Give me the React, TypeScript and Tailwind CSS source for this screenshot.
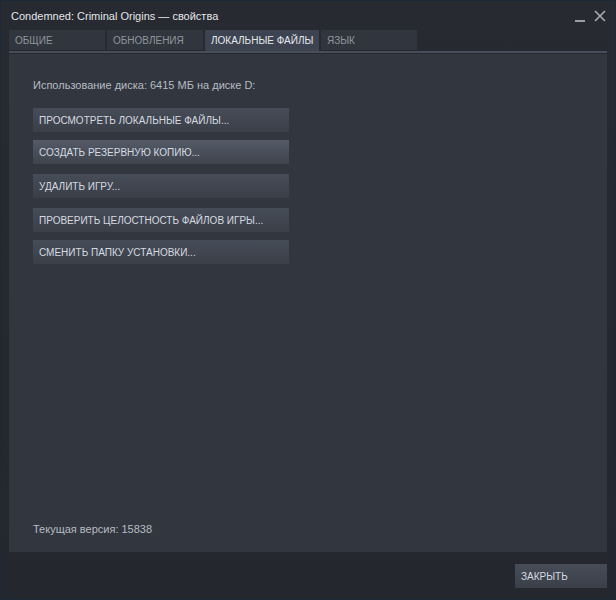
import React from 'react';

const tabs = ['ОБЩИЕ', 'ОБНОВЛЕНИЯ', 'ЛОКАЛЬНЫЕ ФАЙЛЫ', 'ЯЗЫК'];

const actions = [
  { label: 'ПРОСМОТРЕТЬ ЛОКАЛЬНЫЕ ФАЙЛЫ...', mt: 'mt-0', hover: false },
  { label: 'СОЗДАТЬ РЕЗЕРВНУЮ КОПИЮ...', mt: 'mt-2', hover: true },
  { label: 'УДАЛИТЬ ИГРУ...', mt: 'mt-[10px]', hover: false },
  { label: 'ПРОВЕРИТЬ ЦЕЛОСТНОСТЬ ФАЙЛОВ ИГРЫ...', mt: 'mt-[10px]', hover: false },
  { label: 'СМЕНИТЬ ПАПКУ УСТАНОВКИ...', mt: 'mt-2', hover: false },
];

const App: React.FC = () => {
  return (
    <div
      className="w-[616px] h-[600px] border border-[#1b2838] bg-gradient-to-b from-[#272a31] to-[#24272d] flex flex-col text-[#c6cbd1]"
      style={{ fontFamily: '"Liberation Sans", Arial, sans-serif' }}
    >
      {/* title bar */}
      <div className="h-[29px] flex items-center pl-[10px] pr-[7px]">
        <span className="text-[11px] text-[#e3e6e9] flex-1 pt-[1px] whitespace-nowrap">
          Condemned: Criminal Origins — свойства
        </span>
        <div className="w-[10px] h-[2px] bg-[#9aa0a6] mt-[10px] mr-[9px]" />
        <svg width="12" height="12" viewBox="0 0 12 12" className="mr-[2px]">
          <path d="M1 1L11 11M11 1L1 11" stroke="#a7acb1" strokeWidth="1.6" />
        </svg>
      </div>

      {/* tabs */}
      <div className="mx-2 flex gap-[2px] border-b-2 border-[#474e59] h-[23px]">
        {tabs.map((t, i) => (
          <div
            key={t}
            className={
              i === 2
                ? 'h-[21px] px-[6px] flex items-center whitespace-nowrap text-[10px] bg-[#3d4350] text-[#e5e8eb] w-[114px]'
                : 'h-[20px] px-[6px] flex items-center whitespace-nowrap text-[10px] bg-[#31353d] text-[#8f959c] w-[96px]'
            }
          >
            {t}
          </div>
        ))}
      </div>

      {/* content */}
      <div className="mx-2 mt-[1px] h-[498px] bg-[#32363e] flex flex-col px-6 pt-[24px] pb-[16px]">
        <div className="text-[11px] text-[#b6bcc3] leading-[14px]">
          Использование диска: 6415 МБ на диске D:
        </div>
        <div className="flex flex-col mt-[16px]">
          {actions.map((a) => (
            <button
              key={a.label}
              className={
                a.mt +
                ' w-[256px] h-[24px] px-[6px] text-left whitespace-nowrap text-[10px] text-[#d5dae0] ' +
                (a.hover
                  ? 'bg-gradient-to-b from-[#545b67] to-[#3f444e]'
                  : 'bg-gradient-to-b from-[#474d58] to-[#3a3f48]')
              }
            >
              {a.label}
            </button>
          ))}
        </div>
        <div className="mt-auto text-[11px] text-[#b6bcc3] leading-[14px]">
          Текущая версия: 15838
        </div>
      </div>

      {/* footer */}
      <div className="flex justify-end pr-2 pt-[12px]">
        <button className="w-[92px] h-[24px] px-[6px] text-left text-[10px] text-[#d5dae0] bg-gradient-to-b from-[#474d58] to-[#3a3f48]">
          ЗАКРЫТЬ
        </button>
      </div>
    </div>
  );
};

export default App;
